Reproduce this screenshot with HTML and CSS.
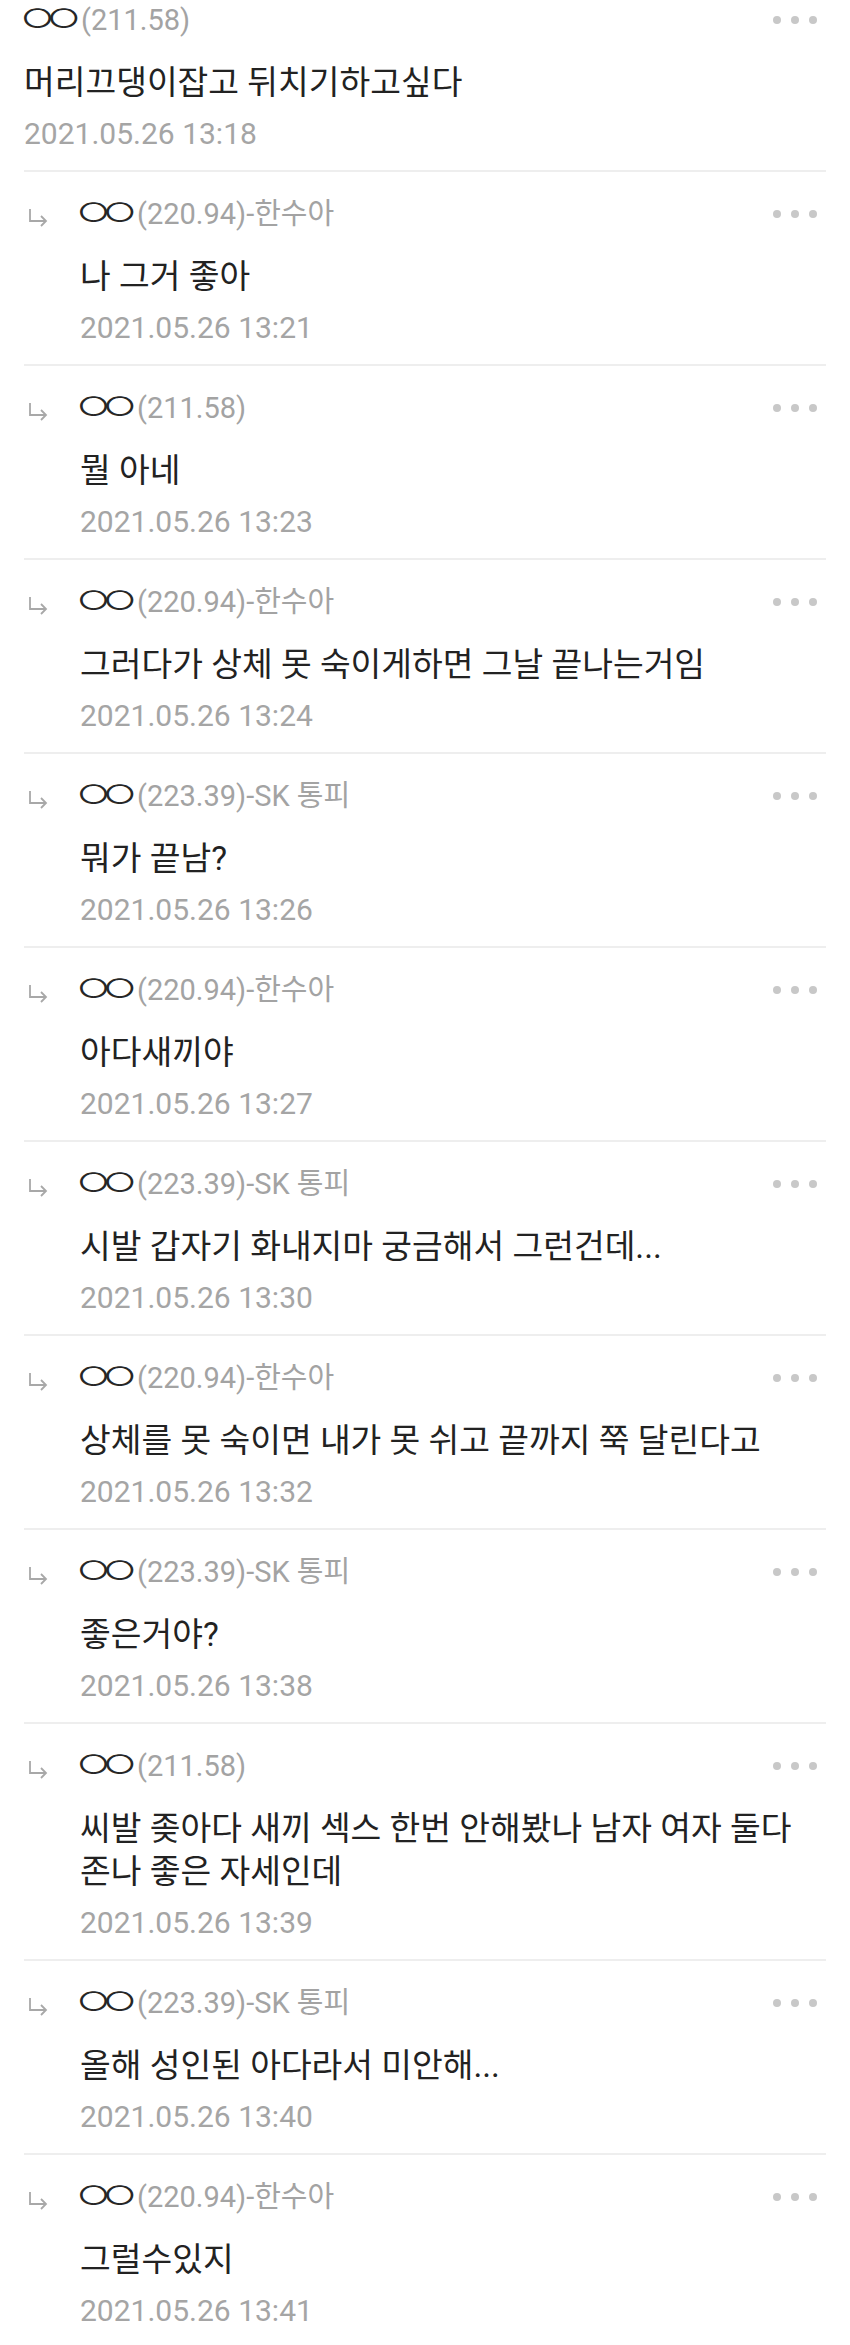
FILE: index.html
```html
<!DOCTYPE html>
<html lang="ko">
<head>
<meta charset="utf-8">
<link rel="stylesheet" href="styles.css">
</head>
<body>
<ul class="comments">
  <li class="comment first">
    <div class="body">
      <div class="head"><span class="nick">ㅇㅇ</span><span class="ip">(211.58)</span><span class="dots"><i></i><i></i><i></i></span></div>
      <p class="text">머리끄댕이잡고 뒤치기하고싶다</p>
      <div class="date">2021.05.26 13:18</div>
    </div>
  </li>
  <li class="comment reply">
    <svg class="arrow" viewBox="0 0 20 18"><path d="M2 0 V12 H18 M13 7 L18 12 L13 17"/></svg>
    <div class="body">
      <div class="head"><span class="nick">ㅇㅇ</span><span class="ip">(220.94)-한수아</span><span class="dots"><i></i><i></i><i></i></span></div>
      <p class="text">나 그거 좋아</p>
      <div class="date">2021.05.26 13:21</div>
    </div>
  </li>
  <li class="comment reply">
    <svg class="arrow" viewBox="0 0 20 18"><path d="M2 0 V12 H18 M13 7 L18 12 L13 17"/></svg>
    <div class="body">
      <div class="head"><span class="nick">ㅇㅇ</span><span class="ip">(211.58)</span><span class="dots"><i></i><i></i><i></i></span></div>
      <p class="text">뭘 아네</p>
      <div class="date">2021.05.26 13:23</div>
    </div>
  </li>
  <li class="comment reply">
    <svg class="arrow" viewBox="0 0 20 18"><path d="M2 0 V12 H18 M13 7 L18 12 L13 17"/></svg>
    <div class="body">
      <div class="head"><span class="nick">ㅇㅇ</span><span class="ip">(220.94)-한수아</span><span class="dots"><i></i><i></i><i></i></span></div>
      <p class="text">그러다가 상체 못 숙이게하면 그날 끝나는거임</p>
      <div class="date">2021.05.26 13:24</div>
    </div>
  </li>
  <li class="comment reply">
    <svg class="arrow" viewBox="0 0 20 18"><path d="M2 0 V12 H18 M13 7 L18 12 L13 17"/></svg>
    <div class="body">
      <div class="head"><span class="nick">ㅇㅇ</span><span class="ip">(223.39)-SK 통피</span><span class="dots"><i></i><i></i><i></i></span></div>
      <p class="text">뭐가 끝남?</p>
      <div class="date">2021.05.26 13:26</div>
    </div>
  </li>
  <li class="comment reply">
    <svg class="arrow" viewBox="0 0 20 18"><path d="M2 0 V12 H18 M13 7 L18 12 L13 17"/></svg>
    <div class="body">
      <div class="head"><span class="nick">ㅇㅇ</span><span class="ip">(220.94)-한수아</span><span class="dots"><i></i><i></i><i></i></span></div>
      <p class="text">아다새끼야</p>
      <div class="date">2021.05.26 13:27</div>
    </div>
  </li>
  <li class="comment reply">
    <svg class="arrow" viewBox="0 0 20 18"><path d="M2 0 V12 H18 M13 7 L18 12 L13 17"/></svg>
    <div class="body">
      <div class="head"><span class="nick">ㅇㅇ</span><span class="ip">(223.39)-SK 통피</span><span class="dots"><i></i><i></i><i></i></span></div>
      <p class="text">시발 갑자기 화내지마 궁금해서 그런건데...</p>
      <div class="date">2021.05.26 13:30</div>
    </div>
  </li>
  <li class="comment reply">
    <svg class="arrow" viewBox="0 0 20 18"><path d="M2 0 V12 H18 M13 7 L18 12 L13 17"/></svg>
    <div class="body">
      <div class="head"><span class="nick">ㅇㅇ</span><span class="ip">(220.94)-한수아</span><span class="dots"><i></i><i></i><i></i></span></div>
      <p class="text">상체를 못 숙이면 내가 못 쉬고 끝까지 쭉 달린다고</p>
      <div class="date">2021.05.26 13:32</div>
    </div>
  </li>
  <li class="comment reply">
    <svg class="arrow" viewBox="0 0 20 18"><path d="M2 0 V12 H18 M13 7 L18 12 L13 17"/></svg>
    <div class="body">
      <div class="head"><span class="nick">ㅇㅇ</span><span class="ip">(223.39)-SK 통피</span><span class="dots"><i></i><i></i><i></i></span></div>
      <p class="text">좋은거야?</p>
      <div class="date">2021.05.26 13:38</div>
    </div>
  </li>
  <li class="comment reply">
    <svg class="arrow" viewBox="0 0 20 18"><path d="M2 0 V12 H18 M13 7 L18 12 L13 17"/></svg>
    <div class="body">
      <div class="head"><span class="nick">ㅇㅇ</span><span class="ip">(211.58)</span><span class="dots"><i></i><i></i><i></i></span></div>
      <p class="text">씨발 좆아다 새끼 섹스 한번 안해봤나 남자 여자 둘다 존나 좋은 자세인데</p>
      <div class="date">2021.05.26 13:39</div>
    </div>
  </li>
  <li class="comment reply">
    <svg class="arrow" viewBox="0 0 20 18"><path d="M2 0 V12 H18 M13 7 L18 12 L13 17"/></svg>
    <div class="body">
      <div class="head"><span class="nick">ㅇㅇ</span><span class="ip">(223.39)-SK 통피</span><span class="dots"><i></i><i></i><i></i></span></div>
      <p class="text">올해 성인된 아다라서 미안해...</p>
      <div class="date">2021.05.26 13:40</div>
    </div>
  </li>
  <li class="comment reply">
    <svg class="arrow" viewBox="0 0 20 18"><path d="M2 0 V12 H18 M13 7 L18 12 L13 17"/></svg>
    <div class="body">
      <div class="head"><span class="nick">ㅇㅇ</span><span class="ip">(220.94)-한수아</span><span class="dots"><i></i><i></i><i></i></span></div>
      <p class="text">그럴수있지</p>
      <div class="date">2021.05.26 13:41</div>
    </div>
  </li>
</ul>
</body>
</html>
```

FILE: styles.css
```css
html, body {
  margin: 0;
  padding: 0;
  background: #ffffff;
}

body {
  font-family: Roboto, "Noto Sans CJK KR", sans-serif;
  color: #222222;
}

.comments {
  list-style: none;
  margin: 0;
  padding: 0 24px;
}

.comment {
  display: flex;
  padding: 22px 0 16px;
  border-bottom: 2px solid #eeeeee;
}

.comment.first {
  padding-top: 0;
}

.arrow {
  flex: 0 0 auto;
  width: 20px;
  height: 18px;
  margin: 15px 32px 0 4px;
  fill: none;
  stroke: #a8a8a8;
  stroke-width: 1.8;
}

.body {
  flex: 1 1 auto;
  min-width: 0;
}

.head {
  display: flex;
  align-items: center;
  height: 40px;
  font-size: 29px;
  line-height: 40px;
}

.nick {
  display: inline-block;
  width: 57px;
  font-size: 49px;
  font-weight: 300;
  letter-spacing: -18.8px;
  text-indent: -9px;
  line-height: 40px;
  white-space: nowrap;
  color: #262626;
  transform: scaleY(0.82);
}

.ip {
  color: #a3a3a3;
}

.dots {
  display: flex;
  gap: 10px;
  margin-left: auto;
  margin-right: 9px;
}

.dots i {
  width: 8px;
  height: 8px;
  border-radius: 50%;
  background: #c8c8c8;
}

.text {
  margin: 21px 0 0;
  font-size: 33.4px;
  line-height: 43px;
  color: #222222;
}

.date {
  margin-top: 10px;
  font-size: 30px;
  line-height: 40px;
  color: #a5a5a5;
}
```
